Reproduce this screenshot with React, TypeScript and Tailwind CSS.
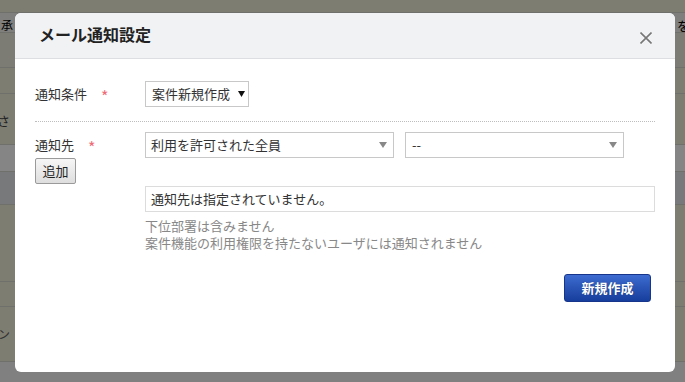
import React from "react";

const bands = [
  { h: "h-[13px]", bg: "bg-[#7e7d72]" },
  { h: "h-[20px]", bg: "bg-[#7f7f7d]" },
  { h: "h-[35px]", bg: "bg-[#7c7c74]" },
  { h: "h-[26px]", bg: "bg-[#7e7d72]" },
  { h: "h-[51px]", bg: "bg-[#7e7d72]" },
  { h: "h-[27px]", bg: "bg-[#858585]" },
  { h: "h-[33px]", bg: "bg-[#78797b]" },
  { h: "h-[77px]", bg: "bg-[#7e7d72]" },
  { h: "h-[25px]", bg: "bg-[#7e7d72]" },
  { h: "h-[55px]", bg: "bg-[#7e7d72]" },
];

function CloseIcon() {
  return (
    <svg width="12" height="12" viewBox="0 0 12 12" fill="none">
      <path d="M0.5 0.5L11.5 11.5M11.5 0.5L0.5 11.5" stroke="#777" strokeWidth="1.6" />
    </svg>
  );
}

function Caret({ color, w = 8 }: { color: string; w?: number }) {
  return (
    <svg width={w} height="6" viewBox={`0 0 ${w} 6`}>
      <path d={`M0 0H${w}L${w / 2} 6Z`} fill={color} />
    </svg>
  );
}

function Required() {
  return <span className="ml-[14px] text-[16px] leading-none text-[#ef6b76] mt-[3px]">*</span>;
}

export default function App() {
  return (
    <div
      className="relative w-[685px] h-[382px] overflow-hidden bg-[#808080] text-[13px] text-[#333]"
      style={{ fontFamily: '"Noto Sans CJK JP", "Noto Sans", sans-serif' }}
    >
      {/* page behind the overlay */}
      <div className="flex flex-col">
        {bands.map((b, i) => (
          <div key={i} className={`${b.h} ${b.bg} border-b border-[#6f6f6b] box-border relative`}>
            {i === 1 && (
              <>
                <span className="absolute left-[1px] top-[3px] text-[12px] text-black">承</span>
                <span className="absolute left-[677px] top-[3px] text-[13px] text-black">を</span>
              </>
            )}
            {i === 4 && (
              <span className="absolute left-[-3px] top-[17px] text-[13px] text-[#222]">さ</span>
            )}
            {i === 9 && (
              <span className="absolute left-[-2px] top-[18px] text-[12px] text-[#333]">ン</span>
            )}
          </div>
        ))}
      </div>

      {/* modal */}
      <div className="absolute left-[15px] top-[13px] w-[660px] h-[359px] bg-white rounded-[6px] overflow-hidden flex flex-col">
        <div className="h-[46px] shrink-0 bg-[#f1f2f4] border-b border-[#dcdee2] flex items-center justify-between pl-[24px] pr-[23px]">
          <h2 className="text-[16px] font-bold text-[#222] mt-[-3px]">メール通知設定</h2>
          <div className="mt-[4px]">
            <CloseIcon />
          </div>
        </div>

        <div className="px-[20px] pt-[22px] flex flex-col">
          {/* 通知条件 */}
          <div className="flex items-center">
            <div className="w-[110px] flex items-center">
              <span>通知条件</span>
              <Required />
            </div>
            <div className="h-[26px] w-[104px] border border-[#c8c8c8] flex items-center pl-[6px]">
              <span>案件新規作成</span>
              <span className="ml-[8px]">
                <Caret color="#111" w={7} />
              </span>
            </div>
          </div>

          <div className="mt-[14px] border-t border-dotted border-[#bdbdbd]" />

          {/* 通知先 */}
          <div className="mt-[10px] flex">
            <div className="w-[110px] flex flex-col">
              <div className="h-[26px] flex items-center">
                <span>通知先</span>
                <Required />
              </div>
              <button className="h-[26px] w-[41px] border border-[#9a9a9a] rounded-[2px] bg-gradient-to-b from-[#f6f6f6] to-[#dedede] text-[#222] text-[13px] flex items-center justify-center">
                追加
              </button>
            </div>
            <div className="flex-1 flex flex-col">
              <div className="flex gap-[11px]">
                <div className="h-[26px] w-[249px] border border-[#c8c8c8] flex items-center justify-between pl-[5px] pr-[6px]">
                  <span>利用を許可された全員</span>
                  <Caret color="#888" />
                </div>
                <div className="h-[26px] w-[219px] border border-[#c8c8c8] flex items-center justify-between pl-[6px] pr-[6px]">
                  <span>--</span>
                  <Caret color="#888" />
                </div>
              </div>
              <div className="mt-[28px] h-[26px] border border-[#dcdcdc] flex items-center pl-[5px] w-[510px]">
                通知先は指定されていません。
              </div>
              <div className="mt-[5px] text-[#888] flex flex-col">
                <div className="h-[17px] leading-[17px]">下位部署は含みません</div>
                <div className="h-[17px] leading-[17px]">案件機能の利用権限を持たないユーザには通知されません</div>
              </div>
            </div>
          </div>

          <div className="mt-[23px] flex justify-end pr-[4px]">
            <button className="h-[28px] w-[87px] rounded-[3px] border border-[#17358a] bg-gradient-to-b from-[#3d6bd0] to-[#173e9c] text-white font-bold text-[13px] flex items-center justify-center [text-shadow:0_0_1px_rgba(0,0,0,0.4)]">
              新規作成
            </button>
          </div>
        </div>
      </div>
    </div>
  );
}
